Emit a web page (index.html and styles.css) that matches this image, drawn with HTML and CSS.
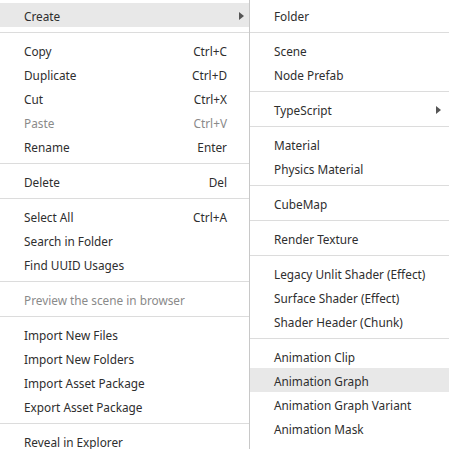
FILE: index.html
```html
<!DOCTYPE html>
<html><head><link rel="stylesheet" href="styles.css"></head>
<body>
<div class="screen">
  <div class="menu main">
    <div class="item active"><span class="label">Create</span><span class="arrow"></span></div>
    <div class="sep"></div>
    <div class="item"><span class="label">Copy</span><span class="key">Ctrl+C</span></div>
    <div class="item"><span class="label">Duplicate</span><span class="key">Ctrl+D</span></div>
    <div class="item"><span class="label">Cut</span><span class="key">Ctrl+X</span></div>
    <div class="item disabled"><span class="label">Paste</span><span class="key">Ctrl+V</span></div>
    <div class="item"><span class="label">Rename</span><span class="key">Enter</span></div>
    <div class="sep"></div>
    <div class="item"><span class="label">Delete</span><span class="key">Del</span></div>
    <div class="sep"></div>
    <div class="item"><span class="label">Select All</span><span class="key">Ctrl+A</span></div>
    <div class="item"><span class="label">Search in Folder</span></div>
    <div class="item"><span class="label">Find UUID Usages</span></div>
    <div class="sep"></div>
    <div class="item disabled"><span class="label">Preview the scene in browser</span></div>
    <div class="sep"></div>
    <div class="item"><span class="label">Import New Files</span></div>
    <div class="item"><span class="label">Import New Folders</span></div>
    <div class="item"><span class="label">Import Asset Package</span></div>
    <div class="item"><span class="label">Export Asset Package</span></div>
    <div class="sep"></div>
    <div class="item"><span class="label">Reveal in Explorer</span></div>
  </div>
  <div class="menu sub">
    <div class="item"><span class="label">Folder</span></div>
    <div class="sep"></div>
    <div class="item"><span class="label">Scene</span></div>
    <div class="item"><span class="label">Node Prefab</span></div>
    <div class="sep"></div>
    <div class="item"><span class="label">TypeScript</span><span class="arrow"></span></div>
    <div class="sep"></div>
    <div class="item"><span class="label">Material</span></div>
    <div class="item"><span class="label">Physics Material</span></div>
    <div class="sep"></div>
    <div class="item"><span class="label">CubeMap</span></div>
    <div class="sep"></div>
    <div class="item"><span class="label">Render Texture</span></div>
    <div class="sep"></div>
    <div class="item"><span class="label">Legacy Unlit Shader (Effect)</span></div>
    <div class="item"><span class="label">Surface Shader (Effect)</span></div>
    <div class="item"><span class="label">Shader Header (Chunk)</span></div>
    <div class="sep"></div>
    <div class="item"><span class="label">Animation Clip</span></div>
    <div class="item active"><span class="label">Animation Graph</span></div>
    <div class="item"><span class="label">Animation Graph Variant</span></div>
    <div class="item"><span class="label">Animation Mask</span></div>
  </div>
</div>
</body></html>
```
FILE: styles.css
```css
html, body {
  margin: 0;
  padding: 0;
  background: #fff;
}
.screen {
  display: flex;
  width: 449px;
  height: 449px;
  overflow: hidden;
  font-family: "Noto Sans", sans-serif;
  font-size: 11.8px;
  color: #2e2e2e;
}
.menu {
  display: flex;
  flex-direction: column;
  padding-top: 3px;
  flex-shrink: 0;
}
.main {
  width: 249px;
}
.sub {
  width: 230px;
  border-left: 1px solid #c8c8c8;
}
.item {
  display: flex;
  align-items: center;
  height: 24px;
  flex-shrink: 0;
  padding: 1px 22px 0 24px;
  box-sizing: border-box;
  position: relative;
}
.label {
  flex: 1;
  white-space: nowrap;
}
.key {
  white-space: nowrap;
}
.item.active {
  background: #e8e8e8;
}
.item.disabled {
  color: #8a8a8a;
}
.arrow {
  width: 0;
  height: 0;
  border-top: 4px solid transparent;
  border-bottom: 4px solid transparent;
  border-left: 5px solid #555;
  margin-right: -17px;
}
.sub .arrow {
  margin-right: 0;
  position: absolute;
  left: 186px;
}
.sep {
  flex-shrink: 0;
  height: 1px;
  margin: 5px 0;
  background: #dcdcdc;
}
```
